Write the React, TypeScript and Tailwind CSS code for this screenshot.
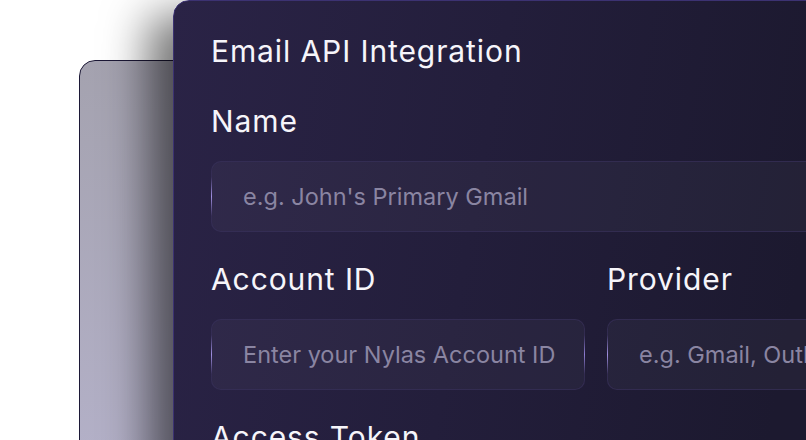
import React from "react";

const font = { fontFamily: "Inter, 'Noto Sans', sans-serif" };

function Field({ placeholder }: { placeholder: string }) {
  return (
    <div className="relative h-[71px] rounded-[10px] border border-[#37315a]/70 bg-white/[0.035]">
      {/* soft glow on the side edges */}
      <span className="absolute -left-px top-[22%] h-[56%] w-px bg-gradient-to-b from-transparent via-[#a08fe0] to-transparent" />
      <span className="absolute -right-px top-[22%] h-[56%] w-px bg-gradient-to-b from-transparent via-[#8c7cd0] to-transparent" />
      <input
        readOnly
        placeholder={placeholder}
        className="h-full w-full bg-transparent pl-[31px] pr-[8px] text-[23.5px] text-white outline-none placeholder:text-[#8a85a2]"
        style={font}
      />
    </div>
  );
}

const labelCls = "block text-[30px] leading-[36px] tracking-[0.9px] text-[#f6f5fa]";

export default function App() {
  return (
    <div className="relative h-[440px] w-[806px] overflow-hidden bg-white" style={font}>
      {/* card behind */}
      <div className="ml-[79px] mt-[60px] h-[420px] w-[200px] rounded-[16px] border border-[#1c1836] bg-gradient-to-b from-[#a4a2af] to-[#b4b1c9]" />

      {/* front card */}
      <div className="absolute left-[173px] top-0 w-[860px] rounded-[16px] border border-[#3c3272] bg-[linear-gradient(100deg,#2a2346_0%,#231e3b_35%,#1c192f_70%,#1c1930_100%)] px-[37px] pt-[32px] pb-10 shadow-[-25px_15px_45px_rgba(0,0,0,0.55)]">
        <h2 className={labelCls}>Email API Integration</h2>

        <label className={`mt-[34px] ${labelCls}`}>Name</label>
        <div className="mt-[22px]">
          <Field placeholder="e.g. John's Primary Gmail" />
        </div>

        <div className="mt-[29px] grid grid-cols-[374px_374px] gap-x-[22px]">
          <div>
            <label className={labelCls}>Account ID</label>
            <div className="mt-[22px]">
              <Field placeholder="Enter your Nylas Account ID" />
            </div>
          </div>
          <div>
            <label className={labelCls}>Provider</label>
            <div className="mt-[22px]">
              <Field placeholder="e.g. Gmail, Outlook" />
            </div>
          </div>
        </div>

        <label className={`mt-[29px] ${labelCls}`}>Access Token</label>
        <div className="mt-[22px]">
          <Field placeholder="Paste your access token" />
        </div>
      </div>
    </div>
  );
}
